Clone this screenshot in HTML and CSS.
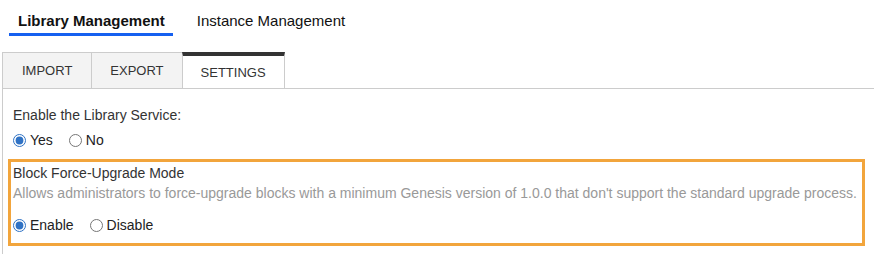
FILE: index.html
```html
<!DOCTYPE html>
<html lang="en">
  <head>
    <meta charset="UTF-8" />
    <meta name="viewport" content="width=device-width, initial-scale=1.0" />
    <title>Library Settings</title>
    <link rel="stylesheet" href="styles.css">
  </head>
  <body>
    <nav class="main-nav">
      <a class="nav-item active" href="#">Library Management</a>
      <a class="nav-item" href="#">Instance Management</a>
    </nav>

    <div class="tabs">
      <div class="tab">IMPORT</div>
      <div class="tab">EXPORT</div>
      <div class="tab active">SETTINGS</div>
    </div>

    <div class="panel">
      <div class="field">
        <div class="field-label">Enable the Library Service:</div>
        <div class="options">
          <label class="option"><input type="radio" name="service" checked /> Yes</label>
          <label class="option"><input type="radio" name="service" /> No</label>
        </div>
      </div>

      <div class="field highlight">
        <div class="field-label">Block Force-Upgrade Mode</div>
        <div class="field-help">Allows administrators to force-upgrade blocks with a minimum Genesis version of 1.0.0 that don't support the standard upgrade process.</div>
        <div class="options">
          <label class="option"><input type="radio" name="force" checked /> Enable</label>
          <label class="option"><input type="radio" name="force" /> Disable</label>
        </div>
      </div>
    </div>
  </body>
</html>
```

FILE: styles.css
```css
body {
  margin: 0;
  padding: 0;
  font-family: "Liberation Sans", Arial, sans-serif;
  font-size: 14px;
  color: #333;
  background-color: #fff;
}

.main-nav {
  display: flex;
  gap: 15px;
  padding-left: 9px;
}

.nav-item {
  display: block;
  padding: 12px 8px 4px 9px;
  line-height: 17px;
  font-size: 15px;
  color: #111;
  text-decoration: none;
  border-bottom: 3px solid transparent;
}

.nav-item.active {
  font-weight: bold;
  border-bottom-color: #1560f0;
}

.tabs {
  display: flex;
  margin: 16px 0 0 2px;
}

.tab {
  height: 35px;
  line-height: 35px;
  padding: 0 18px;
  border: 1px solid #ccc;
  border-bottom: none;
  border-right: none;
  background-color: #f3f3f3;
  color: #333;
  font-size: 13px;
}

.tab:first-child {
  padding: 0 19px;
}

.tab:last-child {
  border-right: 1px solid #ccc;
}

.tab.active {
  height: 32px;
  line-height: 34px;
  border-top: 4px solid #333;
  background-color: #fff;
}

.panel {
  margin-left: 2px;
  min-height: 149px;
  border-top: 1px solid #ccc;
  border-left: 1px solid #ccc;
  padding: 16px 9px 0 5px;
}

.field {
  padding-left: 5px;
}

.field-label,
.field-help {
  line-height: 20px;
}

.field-help {
  color: #999;
}

.options {
  display: flex;
  gap: 16px;
  margin-top: 5px;
  line-height: 20px;
}

.option {
  display: flex;
  align-items: center;
  gap: 4px;
  color: #222;
}

.option input {
  width: 13px;
  height: 13px;
  margin: 0;
  accent-color: #2f72c4;
}

.highlight {
  margin-top: 9px;
  padding: 1px 0 8px 2px;
  border: 3px solid #f2a53c;
}

.highlight .options {
  margin-top: 12px;
}
```
